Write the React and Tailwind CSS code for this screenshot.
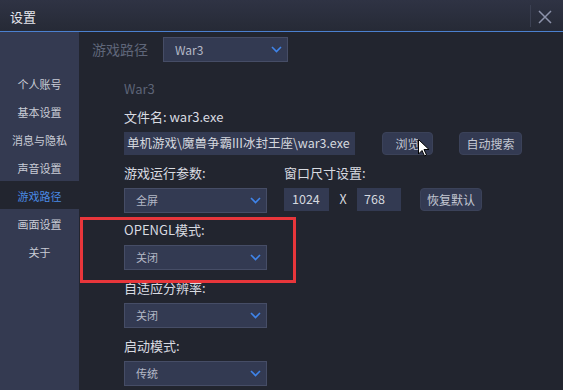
import React from "react";

const menu = ["个人账号", "基本设置", "消息与隐私", "声音设置", "游戏路径", "画面设置", "关于"];

const Chevron = () => (
  <svg width="11" height="7" viewBox="0 0 11 7" className="shrink-0">
    <path d="M1 1 L5.5 5.5 L10 1" fill="none" stroke="#3f84ea" strokeWidth="1.6" />
  </svg>
);

const Select = ({ value, width = "w-[143px]", text = "text-[11px]" }) => (
  <div
    className={`${width} h-[25px] flex items-center justify-between pl-[11px] pr-[5px] bg-[#333a52] border border-[#464d66] ${text} text-[#b4b8c6]`}
  >
    <span>{value}</span>
    <Chevron />
  </div>
);

const Label = ({ children, className = "" }) => (
  <div className={`h-[18px] leading-[18px] text-[13px] text-[#d9dbe1] ${className}`}>{children}</div>
);

const Btn = ({ children, className = "" }) => (
  <div
    className={`h-[23px] flex items-center justify-center rounded-[4px] bg-[#333a52] border border-[#3b4259] text-[12px] text-[#c4c8d3] ${className}`}
  >
    {children}
  </div>
);

export default function App() {
  return (
    <div className="relative w-[563px] h-[390px] overflow-hidden bg-[#22252f] font-['Noto_Sans_CJK_SC','Liberation_Sans',sans-serif]">
      {/* title bar */}
      <div className="h-[32px] flex items-center justify-between bg-gradient-to-b from-[#2f3344] to-[#262a36] border-b border-[#4b80cf]">
        <span className="pl-[10px] pt-[2px] text-[13px] text-[#e6e8ee]">设置</span>
        <div className="flex items-center h-full">
          <div className="w-px h-[22px] bg-[#3b4052] mr-[7px]" />
          <svg width="14" height="14" viewBox="0 0 14 14" className="mr-[11px] mt-[2px]">
            <path d="M1 1 L13 13 M13 1 L1 13" stroke="#8d93ab" strokeWidth="1.5" />
          </svg>
        </div>
      </div>

      <div className="flex h-[358px]">
        {/* sidebar */}
        <div className="w-[79px] h-full bg-[#343a51] pt-[37px] flex flex-col">
          {menu.map((item) => (
            <div
              key={item}
              className={`h-[28px] flex items-center justify-center text-[11px] pt-[2px] ${
                item === "游戏路径" ? "bg-[#22252f] text-[#4a8ae6]" : "text-[#c9ccd6]"
              }`}
            >
              {item}
            </div>
          ))}
        </div>

        {/* main */}
        <div className="flex-1 flex flex-col">
          <div className="flex items-center pl-[13px] mt-[5px]">
            <span className="w-[71px] text-[14px] text-[#5f6679]">游戏路径</span>
            <Select value="War3" width="w-[125px]" text="text-[12px]" />
          </div>

          <div className="pl-[45px] flex flex-col">
            <div className="mt-[18px] h-[18px] leading-[18px] text-[13px] text-[#5d6477]">War3</div>
            <Label className="mt-[10px]">文件名: war3.exe</Label>

            <div className="mt-[6px] flex items-center">
              <div className="w-[231px] h-[23px] flex items-center pl-[3px] bg-[#333a52] text-[12.5px] text-[#d5d8df] whitespace-nowrap overflow-hidden">
                单机游戏\魔兽争霸III冰封王座\war3.exe
              </div>
              <Btn className="ml-[27px] w-[51px]">浏览</Btn>
              <Btn className="ml-[26px] w-[63px]">自动搜索</Btn>
            </div>

            <div className="mt-[9px] flex">
              <div className="w-[160px] flex flex-col">
                <Label>游戏运行参数:</Label>
                <div className="mt-[6px]">
                  <Select value="全屏" />
                </div>
              </div>
              <div className="flex flex-col">
                <Label>窗口尺寸设置:</Label>
                <div className="mt-[6px] flex items-center">
                  <div className="w-[45px] h-[23px] flex items-center pl-[8px] bg-[#333a52] text-[12.5px] text-[#d5d8df]">1024</div>
                  <span className="w-[28px] text-center text-[12.5px] text-[#d5d8df]">X</span>
                  <div className="w-[44px] h-[23px] flex items-center pl-[7px] bg-[#333a52] text-[12.5px] text-[#d5d8df]">768</div>
                  <Btn className="ml-[19px] w-[62px]">恢复默认</Btn>
                </div>
              </div>
            </div>

            <Label className="mt-[8px]">OPENGL模式:</Label>
            <div className="mt-[6px]">
              <Select value="关闭" />
            </div>

            <Label className="mt-[9px]">自适应分辨率:</Label>
            <div className="mt-[6px]">
              <Select value="关闭" />
            </div>

            <Label className="mt-[9px]">启动模式:</Label>
            <div className="mt-[6px]">
              <Select value="传统" />
            </div>
          </div>
        </div>
      </div>

      {/* annotation box */}
      <div className="absolute left-[80px] top-[217px] w-[216px] h-[66px] border-[3px] border-[#e8363b]" />

      {/* mouse cursor */}
      <svg className="absolute left-[418px] top-[139px]" width="12" height="18" viewBox="0 0 12 18">
        <path d="M0.5 0.5 L0.5 15 L4 11.5 L6.5 17 L8.5 16 L6 10.5 L11 10.5 Z" fill="#fff" stroke="#000" strokeWidth="1" />
      </svg>
    </div>
  );
}
